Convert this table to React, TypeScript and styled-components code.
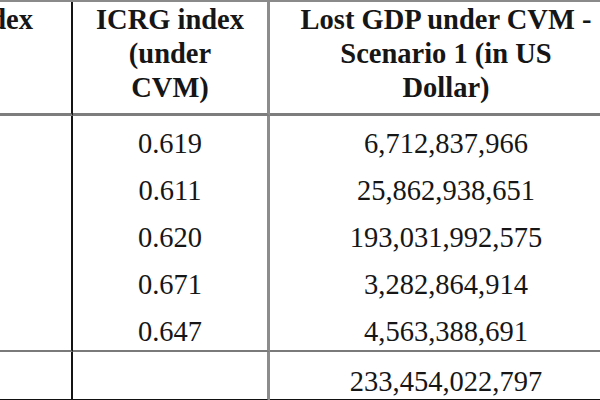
import React from "react";
import styled, { createGlobalStyle } from "styled-components";

const Global = createGlobalStyle`
  html, body { margin: 0; padding: 0; background: #ffffff; overflow: hidden; }
  body { width: 600px; height: 400px; }
`;

const Page = styled.div`
  width: 600px;
  height: 400px;
  overflow: hidden;
  background: #fff;
`;

const Table = styled.div`
  display: grid;
  grid-template-columns: 226px 197px 352px;
  margin-left: -153px;
  width: 775px;
  font-family: "Liberation Serif", "Times New Roman", serif;
  font-size: 28.5px;
  color: #161616;
  border-top: 2px solid #8a8a8a;
`;

const Cell = styled.div<{ $edge?: "dark" | "grey" | "none" }>`
  text-align: center;
  border-right: ${(p) =>
    p.$edge === "dark" ? "2px solid #141414" : p.$edge === "grey" ? "3px solid #8c8c8c" : "none"};
`;

const HeadCell = styled(Cell)`
  font-weight: bold;
  line-height: 34px;
  padding: 1px 0 8px;
  border-bottom: 3px solid #7d7d7d;
`;

const BodyCell = styled(Cell)`
  display: flex;
  flex-direction: column;
  gap: 18.5px;
  padding: 14px 0 3px;
  line-height: 28.5px;
  border-bottom: 2px solid #7a7a7a;
  min-height: 28px;
`;

const TotalCell = styled(Cell)`
  line-height: 28.5px;
  padding: 16px 0 3px;
  height: 28.5px;
  border-bottom: 3px solid #111;
`;

const Line = styled.span`
  display: block;
`;

const icrg = ["0.619", "0.611", "0.620", "0.671", "0.647"];
const lost = [
  "6,712,837,966",
  "25,862,938,651",
  "193,031,992,575",
  "3,282,864,914",
  "4,563,388,691",
];

export default function App() {
  return (
    <Page>
      <Global />
      <Table>
        <HeadCell $edge="dark">ICRG index</HeadCell>
        <HeadCell $edge="grey">
          ICRG index
          <br />
          (under
          <br />
          CVM)
        </HeadCell>
        <HeadCell>
          Lost GDP under CVM -
          <br />
          Scenario 1 (in US
          <br />
          Dollar)
        </HeadCell>

        <BodyCell $edge="dark" />
        <BodyCell $edge="grey">
          {icrg.map((v) => (
            <Line key={v}>{v}</Line>
          ))}
        </BodyCell>
        <BodyCell>
          {lost.map((v) => (
            <Line key={v}>{v}</Line>
          ))}
        </BodyCell>

        <TotalCell $edge="dark" />
        <TotalCell $edge="grey" />
        <TotalCell>233,454,022,797</TotalCell>
      </Table>
    </Page>
  );
}
